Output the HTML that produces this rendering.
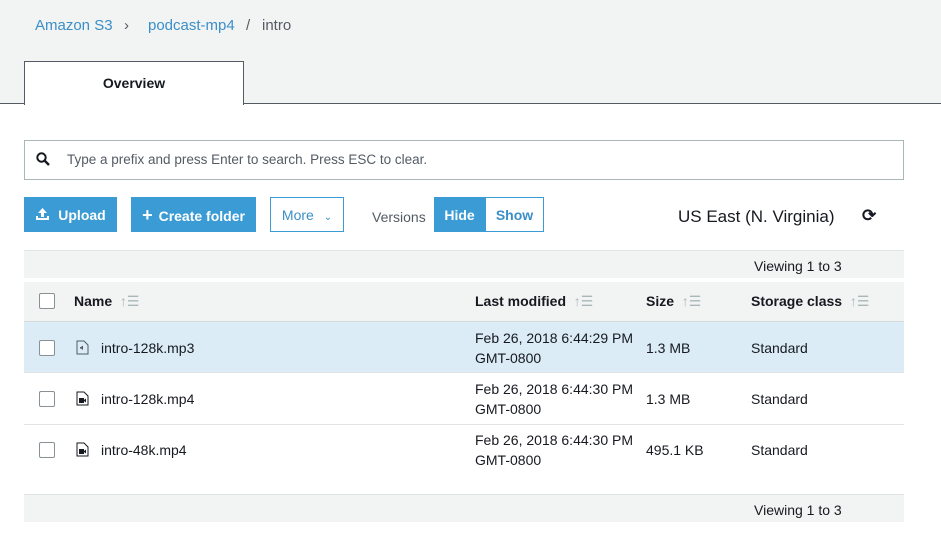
<!DOCTYPE html><html><head><style>
body{margin:0;width:941px;height:554px;background:#fff;font-family:"Liberation Sans",Arial,sans-serif;font-size:14px;color:#16191f;position:relative;overflow:hidden}
.a{position:absolute}
.hdr{left:0;top:0;width:941px;height:103px;background:#f2f3f3;border-bottom:1px solid #545b64}
.tab{left:24px;top:61px;width:218px;height:43px;background:#fff;border:1px solid #545b64;border-bottom:none;text-align:center;line-height:43px;font-weight:bold}
.bc{top:17px;font-size:15px}
.blue{color:#3a8fc9}
.btn{top:197px;height:35px;line-height:37px;font-weight:bold;color:#fff;background:#3a9bd5;text-align:center;font-size:14px}
.ob{top:197px;height:33px;line-height:35px;border:1px solid #3a9bd5;color:#3a8fc9;text-align:center;font-size:14px}
.gbar{left:24px;width:880px;height:27px;background:#f2f3f3;border-top:1px solid #e1e4e4}
.cb{width:14px;height:14px;border:1px solid #879196;border-radius:2px;background:#fff}
.th{top:293px;font-weight:bold}
.row{left:24px;width:880px;height:50px;border-bottom:1px solid #e1e4e4}
.sort{color:#aab7b8;font-weight:normal}
.t2{line-height:20px}
</style></head><body>
<div class="a hdr"></div>
<div class="a bc blue" style="left:35px">Amazon S3</div>
<div class="a bc" style="left:124px;color:#545b64">›</div>
<div class="a bc blue" style="left:148px">podcast-mp4</div>
<div class="a bc" style="left:246px;color:#545b64">/</div>
<div class="a bc" style="left:262px;color:#545b64">intro</div>
<div class="a tab">Overview</div>

<div class="a" style="left:24px;top:140px;width:878px;height:38px;border:1px solid #aab7b8"></div>
<svg class="a" style="left:36px;top:152px" width="14" height="14" viewBox="0 0 14 14"><circle cx="5.5" cy="5.5" r="4.2" fill="none" stroke="#16191f" stroke-width="2"/><path d="M8.5 8.5L13 13" stroke="#16191f" stroke-width="2.4"/></svg>
<div class="a" style="left:67px;top:152px;color:#545b64;font-size:13.5px">Type a prefix and press Enter to search. Press ESC to clear.</div>

<div class="a btn" style="left:24px;width:93px"><svg width="15" height="14" viewBox="0 0 15 14" style="vertical-align:-1px;margin-right:8px"><path d="M7.5 1L3 6h3v4h3V6h3z" fill="#fff"/><path d="M1 9v4h13V9h-2v2H3V9z" fill="#fff"/></svg>Upload</div>
<div class="a btn" style="left:131px;width:125px"><span style="font-size:18px;margin-right:6px">+</span>Create folder</div>
<div class="a ob" style="left:270px;width:72px">More <span style="font-size:10px;margin-left:6px">⌄</span></div>
<div class="a" style="left:372px;top:209px;color:#545b64">Versions</div>
<div class="a btn" style="left:434px;width:51px">Hide</div>
<div class="a ob" style="left:485px;width:57px;font-weight:bold">Show</div>
<div class="a" style="left:678px;top:207px;font-size:17px">US East (N. Virginia)</div>
<div class="a" style="left:862px;top:206px;font-size:17px;font-weight:bold">⟳</div>

<div class="a gbar" style="top:250px"></div>
<div class="a" style="left:754px;top:258px;font-size:14px">Viewing 1 to 3</div>
<div class="a" style="left:24px;top:282px;width:880px;height:39px;background:#f2f3f3;border-bottom:1px solid #d5dbdb"></div>
<div class="a cb" style="left:39px;top:293px"></div>
<div class="a th" style="left:74px">Name <span class="sort">&nbsp;↑☰</span></div>
<div class="a th" style="left:475px">Last modified <span class="sort">&nbsp;↑☰</span></div>
<div class="a th" style="left:646px">Size <span class="sort">&nbsp;↑☰</span></div>
<div class="a th" style="left:751px">Storage class <span class="sort">&nbsp;↑☰</span></div>

<div class="a row" style="top:322px;background:#dbecf6"></div>
<div class="a row" style="top:374px"></div>
<div class="a row" style="top:425px;border-bottom:none"></div>

<div class="a cb" style="left:39px;top:340px"></div>
<div class="a cb" style="left:39px;top:391px"></div>
<div class="a cb" style="left:39px;top:442px"></div>
<svg class="a" style="left:76px;top:340px" width="13" height="15" viewBox="0 0 13 15"><path d="M1 1h7l4 4v9H1z" fill="none" stroke="#545b64"/><path d="M4 7h1l2-1.5v4.5L5 8.5H4z" fill="#545b64"/></svg>
<svg class="a" style="left:76px;top:391px" width="13" height="15" viewBox="0 0 13 15"><path d="M1 1h7l4 4v9H1z" fill="none" stroke="#16191f"/><rect x="3" y="7" width="5" height="5" fill="#16191f"/><path d="M8 9l2-1.5v4L8 10z" fill="#16191f"/></svg>
<svg class="a" style="left:76px;top:442px" width="13" height="15" viewBox="0 0 13 15"><path d="M1 1h7l4 4v9H1z" fill="none" stroke="#16191f"/><rect x="3" y="7" width="5" height="5" fill="#16191f"/><path d="M8 9l2-1.5v4L8 10z" fill="#16191f"/></svg>
<div class="a" style="left:101px;top:340px">intro-128k.mp3</div>
<div class="a" style="left:101px;top:391px">intro-128k.mp4</div>
<div class="a" style="left:101px;top:442px">intro-48k.mp4</div>
<div class="a t2" style="left:475px;top:328px">Feb 26, 2018 6:44:29 PM<br>GMT-0800</div>
<div class="a t2" style="left:475px;top:379px">Feb 26, 2018 6:44:30 PM<br>GMT-0800</div>
<div class="a t2" style="left:475px;top:430px">Feb 26, 2018 6:44:30 PM<br>GMT-0800</div>
<div class="a" style="left:646px;top:340px">1.3 MB</div>
<div class="a" style="left:646px;top:391px">1.3 MB</div>
<div class="a" style="left:646px;top:442px">495.1 KB</div>
<div class="a" style="left:751px;top:340px">Standard</div>
<div class="a" style="left:751px;top:391px">Standard</div>
<div class="a" style="left:751px;top:442px">Standard</div>

<div class="a gbar" style="top:494px"></div>
<div class="a" style="left:754px;top:502px">Viewing 1 to 3</div>
</body></html>
